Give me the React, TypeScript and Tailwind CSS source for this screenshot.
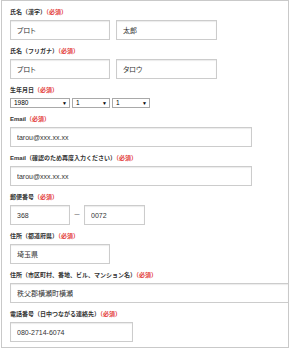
const font = "font-['Liberation_Sans','Noto_Sans_CJK_JP',sans-serif]";

function Label({ text, required = true }: { text: string; required?: boolean }) {
  return (
    <div className="mb-[3px] h-[10px] whitespace-nowrap text-[6px] leading-[10px] font-bold text-[#333333]">
      {text}
      {required && <span className="text-[#e33b3b]">（必須）</span>}
    </div>
  );
}

function Field({ value, width }: { value: string; width: string }) {
  return (
    <input
      readOnly
      defaultValue={value}
      className={`${width} block h-[20px] shrink-0 border border-[#cccccc] bg-white px-[6px] text-[7px] text-[#333333] shadow-[inset_0_1px_1px_rgba(0,0,0,0.08)] outline-none [font-feature-settings:'palt'] ${font}`}
    />
  );
}

function Select({ value, width }: { value: string; width: string }) {
  return (
    <div
      className={`${width} flex h-[10px] items-center justify-between border border-[#a9a9a9] bg-white pl-[3px] pr-[2px] text-[6.5px] leading-none text-black`}
    >
      <span>{value}</span>
      <span className="text-[5px]">▼</span>
    </div>
  );
}

export default function App() {
  return (
    <div className={`bg-white pl-px ${font}`}>
      <div className="h-[348px] w-[288px] overflow-hidden border border-[#c9c9c9] bg-white pl-[8px] pt-[6px]">
        <div className="mb-[6px]">
          <Label text="氏名（漢字）" />
          <div className="flex gap-[6px]">
            <Field value="プロト" width="w-[100px]" />
            <Field value="太郎" width="w-[101px]" />
          </div>
        </div>

        <div className="mb-[6px]">
          <Label text="氏名（フリガナ）" />
          <div className="flex gap-[6px]">
            <Field value="プロト" width="w-[100px]" />
            <Field value="タロウ" width="w-[101px]" />
          </div>
        </div>

        <div className="mb-[6px]">
          <Label text="生年月日" />
          <div className="flex gap-[2px]">
            <Select value="1980" width="w-[60px]" />
            <Select value="1" width="w-[38px]" />
            <Select value="1" width="w-[38px]" />
          </div>
        </div>

        <div className="mb-[6px]">
          <Label text="Email" />
          <Field value="tarou@xxx.xx.xx" width="w-[242px]" />
        </div>

        <div className="mb-[6px]">
          <Label text="Email（確認のため再度入力ください）" />
          <Field value="tarou@xxx.xx.xx" width="w-[242px]" />
        </div>

        <div className="mb-[6px]">
          <Label text="郵便番号" />
          <div className="flex items-center">
            <Field value="368" width="w-[60px]" />
            <span className="w-[14px] text-center text-[7px] text-[#555555]">－</span>
            <Field value="0072" width="w-[61px]" />
          </div>
        </div>

        <div className="mb-[6px]">
          <Label text="住所（都道府県）" />
          <Field value="埼玉県" width="w-[100px]" />
        </div>

        <div className="mb-[6px]">
          <Label text="住所（市区町村、番地、ビル、マンション名）" />
          <Field value="秩父郡横瀬町横瀬" width="w-[279px]" />
        </div>

        <div>
          <Label text="電話番号（日中つながる連絡先）" />
          <Field value="080-2714-6074" width="w-[123px]" />
        </div>
      </div>
    </div>
  );
}
